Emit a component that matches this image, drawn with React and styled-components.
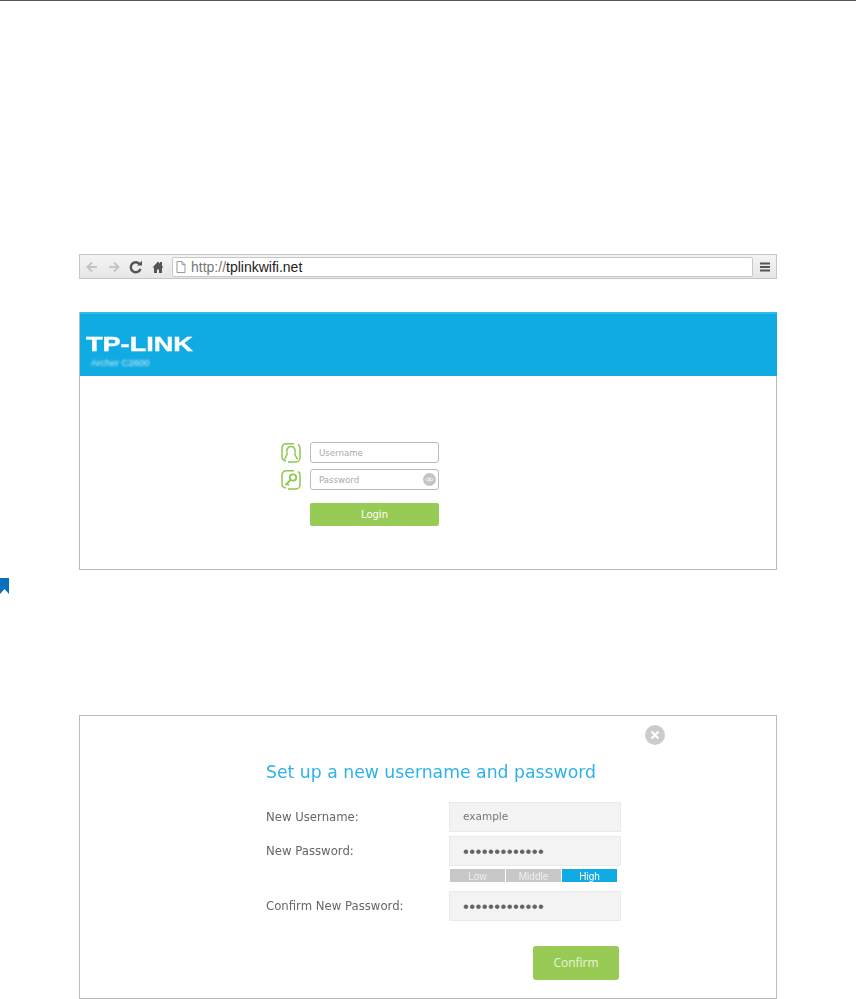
import styled, { createGlobalStyle } from 'styled-components'

const GlobalStyle = createGlobalStyle`
  html, body { margin: 0; padding: 0; background: #fff; }
  body { font-family: "DejaVu Sans", sans-serif; }
`

const Page = styled.div`
  width: 856px;
  height: 999px;
  overflow: hidden;
  border-top: 1px solid #555;
  box-sizing: border-box;
`

const Column = styled.div`
  width: 698px;
  margin-left: 79px;
  padding-top: 253px;
`

const BrowserBar = styled.div`
  height: 25px;
  box-sizing: border-box;
  border: 1px solid #c6c6c6;
  background: linear-gradient(#f4f4f4, #e6e6e6);
  display: flex;
  align-items: center;
  padding: 0 5px;
`

const NavIcon = styled.svg`
  flex: none;
  width: 14px;
  height: 14px;
  margin-right: ${props => props.$gap}px;
`

const AddressField = styled.div`
  flex: 1;
  height: 20px;
  box-sizing: border-box;
  background: #fff;
  border: 1px solid #c8c8c8;
  border-radius: 2px;
  display: flex;
  align-items: center;
  padding-left: 3px;
  gap: 5px;
  font: 14px "Liberation Sans", Arial, sans-serif;
  color: #222;
  margin-right: 6px;
`

const Scheme = styled.span`
  color: #777;
`

const LoginPanel = styled.section`
  margin-top: 33px;
  height: 258px;
  box-sizing: border-box;
  border: 1px solid #b9b9b9;
  border-top: none;
`

const Header = styled.header`
  height: 64px;
  margin: 0 -1px 0 0;
  background: #10abe2;
  border-top: 2px solid #2dbcea;
  box-sizing: border-box;
  padding: 21px 0 0 6px;
  color: #fff;
`

const Logo = styled.div`
  font: bold 21px/18px "Liberation Sans", Arial, sans-serif;
  -webkit-text-stroke: 0.4px #fff;
  transform: scaleX(1.29);
  transform-origin: left center;
`

const Model = styled.div`
  font: 9.5px/10px "Liberation Sans", Arial, sans-serif;
  margin: 5px 0 0 5px;
  color: #cfeefa;
  filter: blur(1px);
`

const LoginForm = styled.div`
  padding: 66px 0 0 201px;
  display: grid;
  grid-template-columns: 20px 129px;
  column-gap: 9px;
  row-gap: 6px;
  align-items: center;
`

const FieldIcon = styled.svg`
  width: 20px;
  height: 20px;
  display: block;
`

const LoginInput = styled.div`
  position: relative;
  height: 21px;
  box-sizing: border-box;
  border: 1px solid #bbb;
  border-radius: 3px;
  padding-left: 8px;
  font: 8.6px/20px "DejaVu Sans", sans-serif;
  color: #aaa;
`

const EyeBadge = styled.svg`
  position: absolute;
  right: 2px;
  top: 3px;
  width: 13px;
  height: 13px;
`

const LoginButton = styled.div`
  grid-column: 2;
  margin-top: 7px;
  height: 23px;
  background: #98cb55;
  border-radius: 2px;
  color: #fff;
  text-align: center;
  font: 10px/23px "DejaVu Sans", sans-serif;
`

const BookmarkRow = styled.div`
  margin: 8px 0 0 -79px;
  height: 16px;
`

const Bookmark = styled.svg`
  display: block;
  width: 9px;
  height: 16px;
`

const DialogPanel = styled.section`
  position: relative;
  margin-top: 121px;
  height: 284px;
  box-sizing: border-box;
  border: 1px solid #bbb;
  padding: 44px 0 0 186px;
`

const CloseIcon = styled.svg`
  position: absolute;
  left: 565px;
  top: 9px;
  width: 20px;
  height: 20px;
`

const Title = styled.h2`
  margin: 0 0 18px;
  font: 400 17.25px/24px "DejaVu Sans", sans-serif;
  color: #2fb2ea;
  filter: blur(0.3px);
`

const FormGrid = styled.div`
  display: grid;
  grid-template-columns: 183px 172px;
  align-items: start;
  filter: blur(0.25px);
`

const Label = styled.label`
  font: 11.7px/30px "DejaVu Sans", sans-serif;
  color: #666;
`

const ValueBox = styled.div`
  height: 30px;
  box-sizing: border-box;
  background: #f3f3f3;
  border: 1px solid #eaeaea;
  padding-left: 13px;
  font: 10.5px/27px "DejaVu Sans", sans-serif;
  color: #777;
  margin-bottom: 4px;
`

const Dots = styled(ValueBox)`
  color: #666;
  font: 17px/29px "Liberation Sans", Arial, sans-serif;
  letter-spacing: 0.3px;
`

const Strength = styled.div`
  grid-column: 2;
  display: flex;
  gap: 1px;
  width: 167px;
  margin: -1px 0 9px 1px;
`

const StrengthCell = styled.div`
  flex: 1;
  height: 13px;
  background: ${props => (props.$active ? '#10abe2' : '#c8c8c8')};
  color: ${props => (props.$active ? '#fff' : '#eee')};
  text-align: center;
  font: 10px/15px "Liberation Sans", Arial, sans-serif;
`

const ConfirmButton = styled.div`
  width: 86px;
  height: 34px;
  margin: 21px 0 0 267px;
  background: #98cb55;
  border-radius: 3px;
  color: #e8f5d6;
  text-align: center;
  font: 12px/34px "Open Sans", sans-serif;
`

const BackIcon = ({ color, flip, gap }) => (
  <NavIcon $gap={gap} viewBox="0 0 14 14" style={flip ? { transform: 'scaleX(-1)' } : undefined}>
    <path d="M12 7H3M7 2.5 2.5 7 7 11.5" fill="none" stroke={color} strokeWidth="2" />
  </NavIcon>
)

const App = () => (
  <>
    <GlobalStyle />
    <Page>
      <Column>
        <BrowserBar>
          <BackIcon color="#c4c4c4" gap={8} />
          <BackIcon color="#c4c4c4" flip gap={8} />
          <NavIcon $gap={8} viewBox="0 0 14 14">
            <path d="M10.8 4.2A5 5 0 1 0 11.5 9" fill="none" stroke="#555" strokeWidth="2.4" />
            <path d="M8 5.5h5V.8z" fill="#555" />
          </NavIcon>
          <NavIcon $gap={7} viewBox="0 0 14 14">
            <path d="M7 1.500 1.500 7.500H3V13h3V9.500h2V13h3V7.500h1.500L11 5.800V2H9v1.800z" fill="#555" />
          </NavIcon>
          <AddressField>
            <svg width="10" height="12" viewBox="0 0 10 12">
              <path d="M1 .5h5l3 3v8H1zM6 .5v3h3" fill="#fff" stroke="#999" />
            </svg>
            <span><Scheme>http://</Scheme>tplinkwifi.net</span>
          </AddressField>
          <svg width="12" height="12" viewBox="0 0 12 12">
            <path d="M1 1.500h10v2H1zM1 5h10v2H1zM1 8.500h10v2H1z" fill="#555" />
          </svg>
        </BrowserBar>

        <LoginPanel>
          <Header>
            <Logo>TP-LINK</Logo>
            <Model>Archer C2600</Model>
          </Header>
          <LoginForm>
            <FieldIcon viewBox="0 0 20 20" fill="none" stroke="#8fc74f" strokeWidth="1.5">
              <path d="M13 .8H5A4 4 0 0 0 1 4.800v9A4 4 0 0 0 5 18M7 19h8a4 4 0 0 0 4-4V5a4 4 0 0 0-2-3.500" />
              <path d="M3.500 16.500c.8-2 2-3.500 2.700-5.500C5 8 6 3.500 10 3.500S15 8 13.800 11c.7 2 1.900 3.500 2.700 5.500" />
            </FieldIcon>
            <LoginInput>Username</LoginInput>
            <FieldIcon viewBox="0 0 20 20" fill="none" stroke="#8fc74f" strokeWidth="1.5">
              <path d="M13 .8H5A4 4 0 0 0 1 4.800v9A4 4 0 0 0 5 18M7 19h8a4 4 0 0 0 4-4V5a4 4 0 0 0-2-3.500" />
              <circle cx="12" cy="7.500" r="3.200" strokeWidth="1.800" />
              <path d="M9.500 10 4.500 15M6 13.500l1.800 1.800" strokeWidth="1.800" />
            </FieldIcon>
            <LoginInput>
              Password
              <EyeBadge viewBox="0 0 13 13">
                <circle cx="6.500" cy="6.500" r="6.500" fill="#c4c4c4" />
                <path d="M2.500 6.500C4 4.500 9 4.500 10.500 6.500 9 8.500 4 8.500 2.500 6.500z" fill="none" stroke="#eee" />
                <circle cx="6.500" cy="6.500" r="1.300" fill="#eee" />
              </EyeBadge>
            </LoginInput>
            <LoginButton>Login</LoginButton>
          </LoginForm>
        </LoginPanel>

        <BookmarkRow>
          <Bookmark viewBox="0 0 9 16">
            <path d="M0 0h9v16L4.500 11 0 16z" fill="#0b6fc0" />
          </Bookmark>
        </BookmarkRow>

        <DialogPanel>
          <CloseIcon viewBox="0 0 20 20">
            <circle cx="10" cy="10" r="10" fill="#ccc" />
            <path d="M6.500 6.500l7 7M13.500 6.500l-7 7" stroke="#fff" strokeWidth="2" />
          </CloseIcon>
          <Title>Set up a new username and password</Title>
          <FormGrid>
            <Label>New Username:</Label>
            <ValueBox>example</ValueBox>
            <Label>New Password:</Label>
            <Dots>•••••••••••••</Dots>
            <Strength>
              <StrengthCell>Low</StrengthCell>
              <StrengthCell>Middle</StrengthCell>
              <StrengthCell $active>High</StrengthCell>
            </Strength>
            <Label>Confirm New Password:</Label>
            <Dots>•••••••••••••</Dots>
          </FormGrid>
          <ConfirmButton>Confirm</ConfirmButton>
        </DialogPanel>
      </Column>
    </Page>
  </>
)

export default App
